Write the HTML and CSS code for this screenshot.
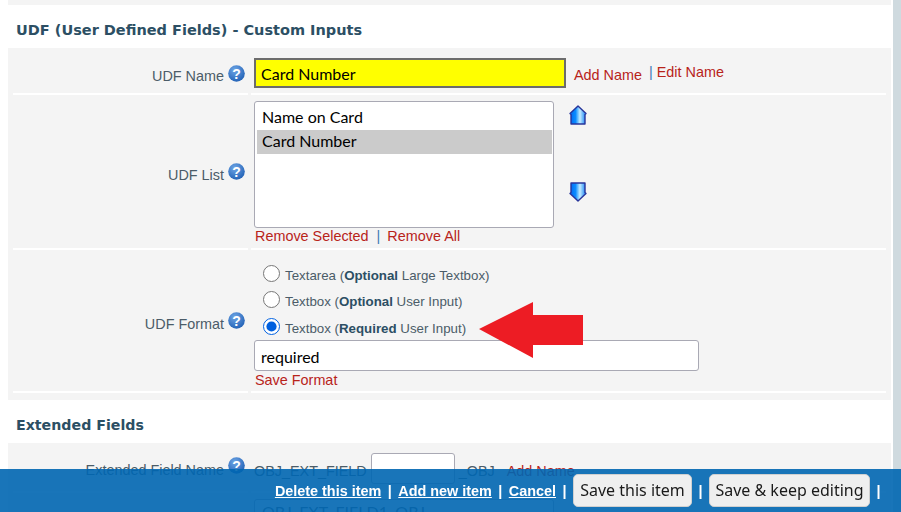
FILE: index.html
```html
<!DOCTYPE html>
<html lang="en">
<head>
    <meta charset="UTF-8">
    <meta name="viewport" content="width=device-width, initial-scale=1.0">
    <title>UDF - Custom Inputs</title>
    <link rel="stylesheet" href="styles.css">
</head>
<body>
    <svg class="icon-defs" width="0" height="0">
        <defs>
            <radialGradient id="help-fill" cx="40%" cy="30%" r="75%">
                <stop offset="0" stop-color="#6fa6e6"/>
                <stop offset="1" stop-color="#1f5fb4"/>
            </radialGradient>
            <linearGradient id="arrow-fill" x1="0" y1="0" x2="1" y2="0">
                <stop offset="0" stop-color="#0068f0"/>
                <stop offset="0.35" stop-color="#0a8cff"/>
                <stop offset="0.62" stop-color="#c4ecff"/>
                <stop offset="1" stop-color="#0a7cf5"/>
            </linearGradient>
            <symbol id="help" viewBox="0 0 17 17">
                <circle cx="8.5" cy="8.5" r="8.3" fill="url(#help-fill)"/>
                <text x="8.5" y="13.6" text-anchor="middle" class="help-mark">?</text>
            </symbol>
        </defs>
    </svg>

    <div class="page">
        <div class="panel-stub"></div>

        <h2 class="section-title">UDF (User Defined Fields) - Custom Inputs</h2>
        <div class="panel">
            <div class="row row-name">
                <div class="label"><span>UDF Name</span><svg class="help"><use href="#help"/></svg></div>
                <div class="value name-value">
                    <input class="text-input highlight" type="text" value="Card Number">
                    <a class="link add-name">Add Name</a>
                    <span class="sep sep-name">|</span>
                    <a class="link edit-name">Edit Name</a>
                </div>
            </div>

            <div class="row row-list">
                <div class="label"><span>UDF List</span><svg class="help"><use href="#help"/></svg></div>
                <div class="value">
                    <div class="list-wrap">
                        <div class="listbox">
                            <div class="list-option">Name on Card</div>
                            <div class="list-option selected">Card Number</div>
                        </div>
                        <div class="order-arrows">
                            <svg class="order-arrow" viewBox="0 0 18 20"><path d="M9 1 L17 8.5 L16 9.5 V19 H2 V9.5 L1 8.5 Z" fill="url(#arrow-fill)" stroke="#27349a" stroke-width="1.4" stroke-linejoin="round"/></svg>
                            <svg class="order-arrow" viewBox="0 0 18 20"><path d="M2 1 H16 V10.5 L17 11.5 L9 19 L1 11.5 L2 10.5 Z" fill="url(#arrow-fill)" stroke="#27349a" stroke-width="1.4" stroke-linejoin="round"/></svg>
                        </div>
                    </div>
                    <div class="list-links">
                        <a class="link">Remove Selected</a>
                        <span class="sep">|</span>
                        <a class="link">Remove All</a>
                    </div>
                </div>
            </div>

            <div class="row row-format">
                <div class="label"><span>UDF Format</span><svg class="help"><use href="#help"/></svg></div>
                <div class="value">
                    <label class="radio-line"><input type="radio" name="format"><span>Textarea (<b>Optional</b> Large Textbox)</span></label>
                    <label class="radio-line"><input type="radio" name="format"><span>Textbox (<b>Optional</b> User Input)</span></label>
                    <label class="radio-line"><input type="radio" name="format" checked><span>Textbox (<b>Required</b> User Input)</span></label>
                    <input class="text-input format-input" type="text" value="required">
                    <a class="link save-format">Save Format</a>
                </div>
            </div>
            <svg class="red-arrow" viewBox="0 0 104 56"><path d="M0 27 L54 0 V13 H104 V43 H54 V56 Z" fill="#ed1c24"/></svg>
        </div>

        <h2 class="section-title extended-title">Extended Fields</h2>
        <div class="panel">
            <div class="row row-ext">
                <div class="label"><span>Extended Field Name</span><svg class="help"><use href="#help"/></svg></div>
                <div class="value ext-value">
                    <span class="muted">OBJ_EXT_FIELD</span>
                    <input class="text-input ext-input" type="text">
                    <span class="muted">_OBJ</span>
                    <a class="link">Add Name</a>
                </div>
            </div>
            <div class="row">
                <div class="label"></div>
                <div class="value ext-list-cell">
                    <div class="ext-list">OBJ_EXT_FIELD1_OBJ</div>
                </div>
            </div>
        </div>
    </div>

    <div class="scroll-track"></div>

    <div class="action-bar">
        <a class="bar-link">Delete this item</a><span class="bar-sep">|</span>
        <a class="bar-link">Add new item</a><span class="bar-sep">|</span>
        <a class="bar-link">Cancel</a><span class="bar-sep">|</span>
        <button class="bar-button save-item">Save this item</button><span class="bar-sep">|</span>
        <button class="bar-button save-keep">Save &amp; keep editing</button><span class="bar-sep">|</span>
    </div>
</body>
</html>
```

FILE: styles.css
```css
html, body {
    height: 100%;
}

body {
    margin: 0;
    overflow: hidden;
    background: #fff;
    font-family: 'Liberation Sans', Arial, sans-serif;
    font-size: 14.4px;
    color: #4b5c68;
}

.icon-defs {
    display: block;
}

.help-mark {
    font-family: 'Liberation Sans', Arial, sans-serif;
    font-size: 14px;
    font-weight: bold;
    fill: #fff;
}

.page {
    width: 883px;
    margin-left: 8px;
}

.panel-stub {
    height: 5px;
    background: #f4f4f4;
}

.section-title {
    margin: 0;
    padding: 17px 0 9px 8px;
    height: 17px;
    line-height: 17px;
    font-family: 'DejaVu Sans', Verdana, sans-serif;
    font-size: 14.5px;
    font-weight: bold;
    color: #2c4f64;
}

.extended-title {
    padding-top: 17px;
    font-size: 14.2px;
}

.panel {
    position: relative;
    padding: 0 5px 7px;
    background: #f4f4f4;
}

.row {
    display: grid;
    grid-template-columns: 235px 635px;
    column-gap: 3px;
}

.label {
    display: flex;
    justify-content: flex-end;
    align-items: center;
    gap: 4px;
    padding-right: 3px;
    border-bottom: 2px solid #fff;
}

.label span {
    padding-top: 7px;
}

.help {
    width: 17px;
    height: 17px;
    flex: none;
}

.value {
    padding-left: 3px;
    border-bottom: 2px solid #fff;
}

.link {
    color: #b8231a;
}

.sep {
    color: #3d7ab5;
}

.text-input {
    box-sizing: border-box;
    display: block;
    height: 31px;
    padding: 2px 6px 0;
    background: #fff;
    border: 1px solid #a9a9b4;
    border-radius: 3px;
    font-family: Lato, 'Noto Sans', sans-serif;
    font-size: 16px;
    color: #000;
}

/* UDF Name */
.row-name .label {
    padding-top: 5px;
}

.row-name .label span {
    padding-top: 5px;
}

.name-value {
    display: flex;
    align-items: flex-start;
    height: 35px;
    padding-top: 10px;
}

.highlight {
    width: 312px;
    height: 30px;
    padding: 0 5px;
    background: #ff0;
    border: 2px solid #6c6c6c;
    border-radius: 0;
}

.add-name {
    margin: 9px 0 0 8px;
}

.sep-name {
    margin: 6px 0 0 7px;
}

.edit-name {
    margin: 6px 0 0 4px;
}

/* UDF List */
.row-list .value {
    height: 147px;
    padding-top: 6px;
}

.list-wrap {
    display: flex;
    height: 127px;
}

.listbox {
    box-sizing: border-box;
    width: 300px;
    height: 127px;
    padding: 4px 1px 4px 2px;
    background: #fff;
    border: 1px solid #a9a9b4;
    border-radius: 3px;
    font-family: Lato, 'Noto Sans', sans-serif;
    font-size: 16px;
    color: #000;
}

.list-option {
    height: 24px;
    line-height: 22px;
    padding-left: 5px;
}

.list-option.selected {
    background: #cbcbcb;
}

.order-arrows {
    display: flex;
    flex-direction: column;
    gap: 57px;
    margin: 4px 0 0 15px;
}

.order-arrow {
    display: block;
    width: 18px;
    height: 20px;
}

.list-links {
    margin-left: 1px;
    line-height: 16px;
}

.list-links .sep {
    margin: 0 3px 0 4px;
}

/* UDF Format */
.row-format .value {
    height: 131px;
    padding-top: 10px;
}

.radio-line {
    display: flex;
    align-items: center;
    height: 26.5px;
    padding-left: 9px;
    font-size: 13.3px;
}

.radio-line span {
    padding-top: 4px;
}

.radio-line b {
    color: #2c4f64;
}

.radio-line input {
    width: 17px;
    height: 17px;
    margin: 0 5px 0 0;
    accent-color: #0060df;
}

.format-input {
    width: 445px;
}

.save-format {
    display: block;
    margin: 1px 0 0 1px;
    line-height: 16px;
}

.red-arrow {
    position: absolute;
    left: 471px;
    top: 254px;
    width: 104px;
    height: 56px;
}

/* Extended fields, mostly behind the action bar */
.row-ext .value {
    height: 38px;
    padding-top: 10px;
}

.ext-value {
    display: flex;
    align-items: flex-start;
    gap: 4px;
}

.ext-value .muted,
.ext-value .link {
    margin-top: 10px;
}

.ext-value .link {
    margin-left: 8px;
}

.row-ext .label {
    padding-bottom: 3px;
}

.row-ext .label span {
    padding-top: 8px;
}

.ext-input {
    width: 84px;
    height: 31px;
}

.ext-list-cell {
    padding-top: 6px;
}

.ext-list {
    box-sizing: border-box;
    width: 300px;
    height: 90px;
    padding: 2px 7px;
    background: #fff;
    border: 1px solid #a9a9b4;
    border-radius: 3px;
    font-family: Lato, 'Noto Sans', sans-serif;
    font-size: 16px;
}

.scroll-track {
    position: fixed;
    top: 0;
    right: 0;
    bottom: 0;
    width: 8px;
    background: #cfdadf;
}

.action-bar {
    position: fixed;
    left: 0;
    right: 0;
    bottom: 0;
    height: 43px;
    box-sizing: border-box;
    display: flex;
    align-items: center;
    justify-content: flex-end;
    padding-right: 14px;
    background: rgba(0, 102, 177, 0.9);
    color: #fff;
    font-size: 14.4px;
}

.bar-link {
    font-weight: bold;
    text-decoration: underline;
    margin-top: 1px;
}

.bar-sep {
    width: 17px;
    text-align: center;
    font-weight: bold;
    margin-top: 1px;
}

.bar-button {
    box-sizing: border-box;
    height: 33px;
    padding: 0 0 2px;
    background: #efefef;
    border: 1px solid #d0d0d0;
    border-radius: 5px;
    font-family: 'Noto Sans', 'Open Sans', sans-serif;
    font-size: 16px;
    color: #1a1a1a;
}

.save-item {
    width: 119px;
}

.save-keep {
    width: 161px;
}
```
